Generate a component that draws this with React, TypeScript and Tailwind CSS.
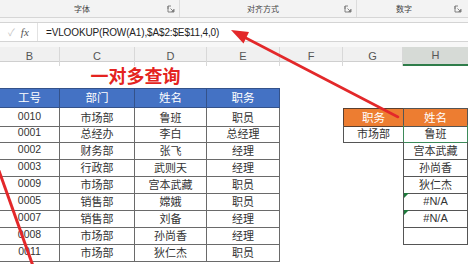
import React from 'react';

const latin = { fontFamily: '"Liberation Sans", "Noto Sans CJK SC", sans-serif' };
const cjk = { fontFamily: '"Noto Sans CJK SC", "Liberation Sans", sans-serif' };

const colTpl = 'grid grid-cols-[74px_75px_72px_73px_63px_60px_65px] ml-[-14px]';

interface Row {
  id: string;
  dept: string;
  name: string;
  title: string;
}

const rows: Row[] = [
  { id: '0010', dept: '市场部', name: '鲁班', title: '职员' },
  { id: '0001', dept: '总经办', name: '李白', title: '总经理' },
  { id: '0002', dept: '财务部', name: '张飞', title: '经理' },
  { id: '0003', dept: '行政部', name: '武则天', title: '经理' },
  { id: '0009', dept: '市场部', name: '宫本武藏', title: '职员' },
  { id: '0005', dept: '销售部', name: '嫦娥', title: '职员' },
  { id: '0007', dept: '销售部', name: '刘备', title: '经理' },
  { id: '0008', dept: '市场部', name: '孙尚香', title: '经理' },
  { id: '0011', dept: '市场部', name: '狄仁杰', title: '职员' },
];

const results = ['鲁班', '宫本武藏', '孙尚香', '狄仁杰', '#N/A', '#N/A', ''];

function Launcher() {
  return (
    <svg width="8" height="8" viewBox="0 0 8 8" className="text-[#777]">
      <path d="M1 4V1h3M1 1v6h6V4" fill="none" stroke="currentColor" strokeWidth="0.9" />
      <path d="M3.5 3.5l3 3M4.5 6.5h2v-2" fill="none" stroke="currentColor" strokeWidth="0.9" />
    </svg>
  );
}

function ErrorMark() {
  return (
    <svg width="5" height="5" viewBox="0 0 5 5" className="absolute left-0 top-0">
      <path d="M0 0h5L0 5z" fill="#1e7a3c" />
    </svg>
  );
}

export default function App() {
  return (
    <div className="relative h-[264px] w-[468px] overflow-hidden bg-white" style={cjk}>
      {/* ribbon group labels */}
      <div className="flex h-[18px] border-b border-[#d6d6d6] bg-[#f3f3f3] text-[8px] text-[#444]">
        <div className="flex w-[180px] items-center border-r border-[#dcdcdc] pr-[4px]">
          <span className="ml-[74px]">字体</span>
          <span className="ml-auto"><Launcher /></span>
        </div>
        <div className="flex w-[177px] items-center border-r border-[#dcdcdc] pr-[4px]">
          <span className="ml-[67px]">对齐方式</span>
          <span className="ml-auto"><Launcher /></span>
        </div>
        <div className="flex flex-1 items-center pr-[6px]">
          <span className="ml-[39px]">数字</span>
          <span className="ml-auto"><Launcher /></span>
        </div>
      </div>
      <div className="h-[4px] bg-[#f7f7f7]" />

      {/* formula bar */}
      <div className="flex h-[20px] border-y border-[#d4d4d4] bg-white">
        <div className="flex w-[38px] items-center border-r border-[#e2e2e2]">
          <span className="ml-[8px] text-[10px] text-[#c4c4c4]" style={latin}>✓</span>
          <span
            className="ml-[6px] text-[11px] italic text-[#555]"
            style={{ fontFamily: '"Liberation Serif", serif' }}
          >
            fx
          </span>
        </div>
        <div className="flex flex-1 items-center pl-[8px] text-[10px] tracking-[-0.15px] text-[#222]" style={latin}>
          =VLOOKUP(ROW(A1),$A$2:$E$11,4,0)
        </div>
      </div>
      <div className="h-[5px] bg-[#f7f7f7]" />

      {/* column letters */}
      <div className={`${colTpl} h-[15px] border-b border-[#cfcfcf] bg-[#f0f0f0] text-[11px] text-[#555]`} style={latin}>
        {['B', 'C', 'D', 'E', 'F', 'G'].map((c, i) => (
          <div
            key={c}
            className={`flex items-center justify-center border-r border-[#d8d8d8] ${i === 0 ? 'pl-[14px]' : ''}`}
          >
            {c}
          </div>
        ))}
        <div className="flex items-center justify-center border-b-2 border-[#2f7d4a] bg-[#d6dad6]">H</div>
      </div>

      {/* title row */}
      <div className={`${colTpl} h-[26px]`}>
        <div
          className="col-span-2 col-start-2 flex items-center justify-center pl-[4px] text-[18px] font-bold text-[#e42320] [text-shadow:0_0_2px_#fff,0_0_1px_#fff]"
          style={cjk}
        >
          一对多查询
        </div>
      </div>

      {/* table header */}
      <div className={`${colTpl} h-[20px] text-[11.5px] text-white`}>
        {['工号', '部门', '姓名', '职务'].map((h, i) => (
          <div
            key={h}
            className={`flex items-center justify-center border-y border-r border-[#34528a] bg-[#4472c4] ${i === 0 ? 'pl-[14px]' : ''}`}
          >
            {h}
          </div>
        ))}
      </div>

      {/* data rows */}
      {rows.map((r, i) => (
        <div key={r.id} className={`${colTpl} h-[17px] text-[11px] text-[#333]`}>
          <div className="flex items-center justify-center border-b border-r border-[#6a6a6a] pl-[14px] text-[10.5px]" style={latin}>
            {r.id}
          </div>
          <div className="flex items-center justify-center border-b border-r border-[#6a6a6a]">{r.dept}</div>
          <div className="flex items-center justify-center border-b border-r border-[#6a6a6a]">{r.name}</div>
          <div className="flex items-center justify-center border-b border-r border-[#6a6a6a]">{r.title}</div>
          <div />
          {i === 0 ? (
            <div className="flex items-center justify-center border border-r-0 border-[#5a4030] bg-[#ed7d31] text-[11.5px] text-white">
              职务
            </div>
          ) : i === 1 ? (
            <div className="flex items-center justify-center border-b border-l border-[#555]">市场部</div>
          ) : (
            <div />
          )}
          {i === 0 ? (
            <div className="flex items-center justify-center border border-[#555] bg-[#ed7d31] text-[11.5px] text-white">
              姓名
            </div>
          ) : i <= 7 ? (
            <div
              className={`relative flex items-center justify-center border-x border-b ${
                i === 1 ? 'border-[#3d8a5a]' : 'border-[#555]'
              }`}
              style={results[i - 1] === '#N/A' ? latin : undefined}
            >
              {results[i - 1] === '#N/A' && <ErrorMark />}
              {results[i - 1]}
            </div>
          ) : (
            <div />
          )}
        </div>
      ))}

      {/* annotation arrows */}
      <svg className="pointer-events-none absolute left-0 top-0" width="468" height="264" viewBox="0 0 468 264">
        <line x1="398" y1="117" x2="244" y2="37" stroke="#e3282a" strokeWidth="2.6" strokeLinecap="round" />
        <path d="M231 30L243.5 43.5L249 32Z" fill="#e3282a" />
        <line x1="-2" y1="168" x2="33" y2="266" stroke="#e3282a" strokeWidth="3" />
      </svg>
    </div>
  );
}
